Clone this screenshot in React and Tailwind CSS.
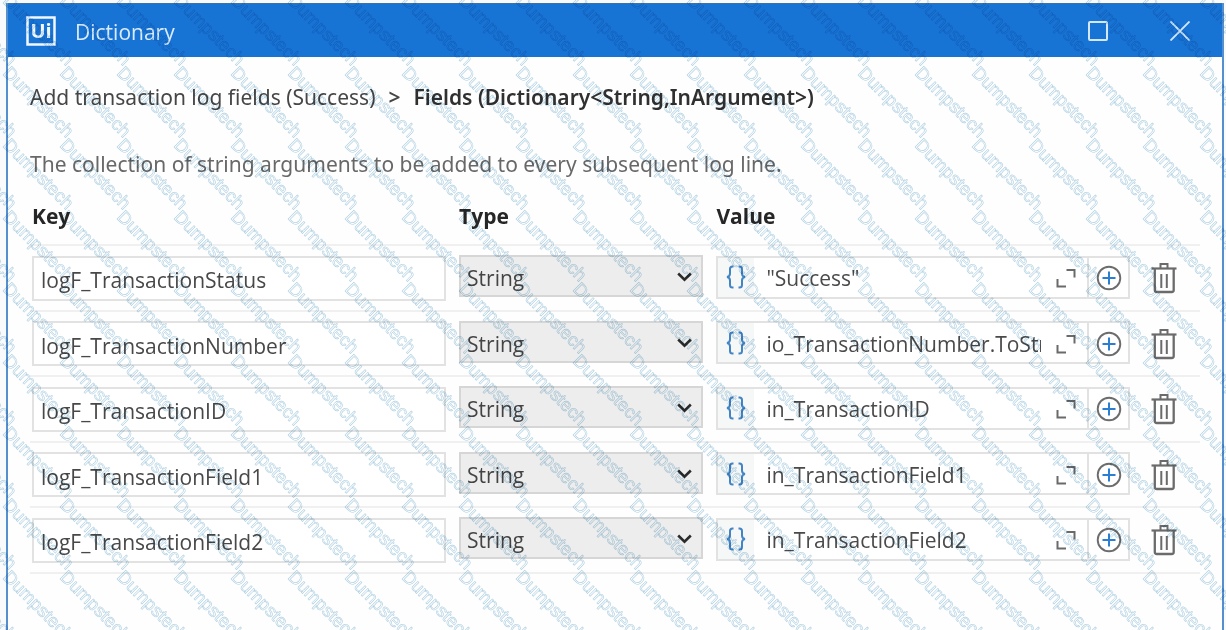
import { useState } from 'react'

const INITIAL_FIELDS = [
  { id: 1, key: 'logF_TransactionStatus', type: 'String', value: '"Success"' },
  { id: 2, key: 'logF_TransactionNumber', type: 'String', value: 'io_TransactionNumber.ToString' },
  { id: 3, key: 'logF_TransactionID', type: 'String', value: 'in_TransactionID' },
  { id: 4, key: 'logF_TransactionField1', type: 'String', value: 'in_TransactionField1' },
  { id: 5, key: 'logF_TransactionField2', type: 'String', value: 'in_TransactionField2' },
]

function Logo() {
  return (
    <svg width="30" height="30" viewBox="0 0 30 30" aria-hidden="true">
      <rect x="1.5" y="1.5" width="27" height="27" fill="none" stroke="#f2f8ff" strokeWidth="2.5" />
      <text
        x="15"
        y="22"
        textAnchor="middle"
        fill="#f2f8ff"
        className="font-['Open_Sans',sans-serif] text-[20px] font-bold"
      >
        Ui
      </text>
    </svg>
  )
}

function TitleBar() {
  return (
    <header className="flex h-[54px] items-center border-t border-[#3f70a3] bg-[#1874d4] pr-[28px] pl-[18px]">
      <Logo />
      <h1 className="ml-[19px] flex-1 pt-[2px] text-[21px] text-[#dcebfa]">Dictionary</h1>
      <button className="p-1" aria-label="Maximize">
        <svg width="20" height="20" viewBox="0 0 20 20" fill="none" stroke="#d5e8fb" strokeWidth="2">
          <rect x="1" y="1" width="18" height="18" rx="1" />
        </svg>
      </button>
      <button className="ml-[54px] p-1" aria-label="Close">
        <svg width="20" height="20" viewBox="0 0 20 20" fill="none" stroke="#d5e8fb" strokeWidth="1.8">
          <path d="M0.5 0.5 19.5 19.5M19.5 0.5 0.5 19.5" />
        </svg>
      </button>
    </header>
  )
}

function TypeSelect({ value, label, onChange }) {
  return (
    <div className="relative">
      <select
        className="block h-[42px] w-full appearance-none border-2 border-[#d6d6d6] bg-[#ededed] px-[6px] pt-1 text-[#444]"
        aria-label={label}
        value={value}
        onChange={(e) => onChange(e.target.value)}
      >
        <option>String</option>
        <option>Int32</option>
        <option>Boolean</option>
      </select>
      <svg
        className="pointer-events-none absolute top-[17px] right-[11px]"
        width="15"
        height="10"
        viewBox="0 0 15 10"
        fill="none"
        stroke="#2b2b2b"
        strokeWidth="2.6"
      >
        <path d="M1.2 1.5 7.5 7.6 13.8 1.5" />
      </svg>
    </div>
  )
}

function ValueEditor({ value, label, onChange }) {
  return (
    <div className="flex h-[43px] border-2 border-[#e2e2e2] bg-white">
      <span className="flex w-9 items-center justify-center bg-[#f6f7f7]">
        <svg width="20" height="24" viewBox="0 0 20 24" fill="none" stroke="#4284c4" strokeWidth="2" aria-hidden="true">
          <path d="M7.5 1.5H6.5Q4 1.5 4 4V8.5Q4 11.5 1 12Q4 12.5 4 15.5V20Q4 22.5 6.5 22.5H7.5" />
          <path d="M12.5 1.5H13.5Q16 1.5 16 4V8.5Q16 11.5 19 12Q16 12.5 16 15.5V20Q16 22.5 13.5 22.5H12.5" />
        </svg>
      </span>
      <input
        className="ml-3 min-w-0 flex-1 bg-transparent pt-[2px] text-[#4a4a4a] outline-none"
        aria-label={label}
        value={value}
        onChange={(e) => onChange(e.target.value)}
      />
      <button className="flex w-[46px] items-center justify-center pt-[2px] pl-1" aria-label="Open expression editor">
        <svg width="20" height="20" viewBox="0 0 20 20" fill="none" stroke="#6a6a6a" strokeWidth="2">
          <path d="M10.5 2H18.5V9.5" />
          <path d="M1.5 11V18.5H10" />
        </svg>
      </button>
      <button
        className="flex w-[41px] items-center justify-center border-l-2 border-[#e2e2e2] pt-[2px]"
        aria-label="Create variable"
      >
        <svg width="26" height="26" viewBox="0 0 26 26" fill="none">
          <circle cx="13" cy="13" r="11.3" stroke="#6c6c6c" strokeWidth="1.9" />
          <path d="M13 6.5V19.5M6.5 13H19.5" stroke="#2b7fd3" strokeWidth="2" />
        </svg>
      </button>
    </div>
  )
}

function TrashIcon() {
  return (
    <svg width="26" height="32" viewBox="0 0 26 32" fill="none" stroke="#6b6b6b" strokeWidth="2">
      <path d="M9.5 6V2H16.5V6" />
      <path d="M0.5 6.5H25.5" strokeWidth="2.2" />
      <path d="M3.8 7V28Q3.8 30 5.8 30H20.7Q22.7 30 22.7 28V7" strokeWidth="2.3" />
      <path d="M10.3 12V26M15.8 12V26" />
    </svg>
  )
}

function FieldsTable({ fields, onChange, onRemove }) {
  return (
    <table className="mt-2 w-full table-fixed text-left">
      <colgroup>
        <col className="w-[36.5%]" />
        <col className="w-[22%]" />
        <col className="w-[36.5%]" />
        <col className="w-[5%]" />
      </colgroup>
      <thead className="text-[#262626]">
        <tr className="h-[58px] border-b-2 border-[#f0f0f0]">
          <th className="pl-[2px] font-bold">Key</th>
          <th className="pl-[2px] font-bold">Type</th>
          <th className="pl-[2px] font-bold">Value</th>
          <td />
        </tr>
      </thead>
      <tbody>
        {fields.map((f) => (
          <tr key={f.id} className="h-[66px] border-b-2 border-[#f0f0f0] even:h-[65px]">
            <td className="pr-[11px] pl-[2px]">
              <input
                className="block h-[45px] w-full border-2 border-[#e2e2e2] bg-white px-[7px] pt-1 text-[#484848]"
                aria-label="Key"
                value={f.key}
                onChange={(e) => onChange(f.id, { key: e.target.value })}
              />
            </td>
            <td className="pr-[11px] pb-1 pl-[2px]">
              <TypeSelect value={f.type} label={`Type of ${f.key}`} onChange={(type) => onChange(f.id, { type })} />
            </td>
            <td className="pr-[11px] pb-[2px] pl-[2px]">
              <ValueEditor value={f.value} label={`Value of ${f.key}`} onChange={(value) => onChange(f.id, { value })} />
            </td>
            <td className="pl-[10px]">
              <button className="block" aria-label={`Delete ${f.key}`} onClick={() => onRemove(f.id)}>
                <TrashIcon />
              </button>
            </td>
          </tr>
        ))}
      </tbody>
    </table>
  )
}

// Repeating diagonal stamp; each tile also draws the tails of its neighbours.
function Watermark() {
  const starts = [-114, -57, 0, 57].flatMap((x) => [-72, 0, 72].map((y) => [x + 2, y + 2]))
  return (
    <svg className="pointer-events-none absolute inset-0 h-full w-full mix-blend-multiply" aria-hidden="true">
      <defs>
        <pattern id="stamp" width="57" height="72" patternUnits="userSpaceOnUse">
          {starts.map(([x, y]) => (
            <text
              key={`${x},${y}`}
              transform={`translate(${x} ${y}) rotate(45)`}
              fill="none"
              stroke="#afd0e2"
              strokeWidth="0.6"
              className="font-['Liberation_Sans',sans-serif] text-[18px]"
            >
              Dumpstech
            </text>
          ))}
        </pattern>
      </defs>
      <rect width="100%" height="100%" fill="url(#stamp)" />
    </svg>
  )
}

export default function App() {
  const [fields, setFields] = useState(INITIAL_FIELDS)

  const updateField = (id, patch) => setFields(fields.map((f) => (f.id === id ? { ...f, ...patch } : f)))
  const removeField = (id) => setFields(fields.filter((f) => f.id !== id))

  return (
    <div className="relative flex min-h-screen flex-col overflow-hidden bg-[#f8fafc] pt-[3px] pr-[2px] pl-[6px] font-['Open_Sans',sans-serif] text-[21px] leading-[30px]">
      <div className="flex flex-1 flex-col border-x-2 border-[#5490cf] bg-[#fefefe]">
        <TitleBar />
        <main className="px-[22px] pt-[25px]">
          <nav className="flex gap-[13px] font-['Noto_Sans',sans-serif] text-[#464646]" aria-label="Breadcrumb">
            <a href="#log-fields">Add transaction log fields (Success)</a>
            <span className="font-semibold">&gt;</span>
            <span className="font-semibold text-[#303030]">Fields (Dictionary&lt;String,InArgument&gt;)</span>
          </nav>
          <p className="mt-[37px] font-['Noto_Sans',sans-serif] text-[#686868]">
            The collection of string arguments to be added to every subsequent log line.
          </p>
          <FieldsTable fields={fields} onChange={updateField} onRemove={removeField} />
        </main>
      </div>
      <Watermark />
    </div>
  )
}
